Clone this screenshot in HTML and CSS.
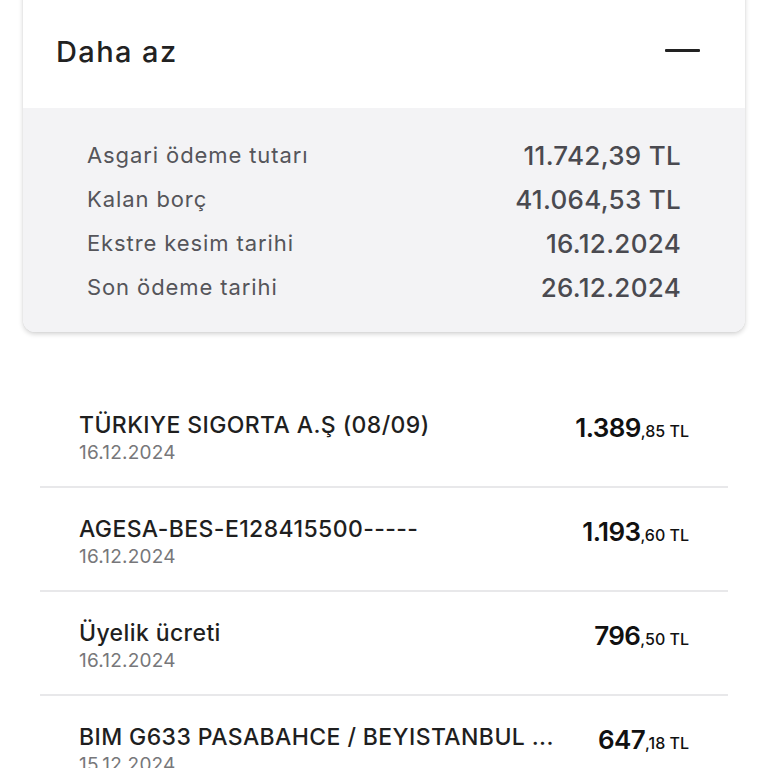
FILE: index.html
```html
<!DOCTYPE html>
<html lang="tr">
<head>
<meta charset="utf-8">
<link rel="stylesheet" href="styles.css">
</head>
<body>
<div class="page">
  <section class="card">
    <div class="card-head">
      <span class="card-title">Daha az</span>
      <span class="minus"></span>
    </div>
    <div class="card-body">
      <div class="info-row"><span class="info-label">Asgari ödeme tutarı</span><span class="info-value">11.742,39 TL</span></div>
      <div class="info-row"><span class="info-label">Kalan borç</span><span class="info-value">41.064,53 TL</span></div>
      <div class="info-row"><span class="info-label">Ekstre kesim tarihi</span><span class="info-value">16.12.2024</span></div>
      <div class="info-row"><span class="info-label">Son ödeme tarihi</span><span class="info-value">26.12.2024</span></div>
    </div>
  </section>

  <ul class="tx-list">
    <li class="tx">
      <div class="tx-main"><div class="tx-title">TÜRKIYE SIGORTA A.Ş (08/09)</div><div class="tx-date">16.12.2024</div></div>
      <div class="tx-amount"><span class="amt-int">1.389</span><span class="amt-dec">,85 TL</span></div>
    </li>
    <li class="tx">
      <div class="tx-main"><div class="tx-title">AGESA-BES-E128415500-----</div><div class="tx-date">16.12.2024</div></div>
      <div class="tx-amount"><span class="amt-int">1.193</span><span class="amt-dec">,60 TL</span></div>
    </li>
    <li class="tx">
      <div class="tx-main"><div class="tx-title">Üyelik ücreti</div><div class="tx-date">16.12.2024</div></div>
      <div class="tx-amount"><span class="amt-int">796</span><span class="amt-dec">,50 TL</span></div>
    </li>
    <li class="tx">
      <div class="tx-main"><div class="tx-title">BIM G633 PASABAHCE / BEYISTANBUL ...</div><div class="tx-date">15.12.2024</div></div>
      <div class="tx-amount"><span class="amt-int">647</span><span class="amt-dec">,18 TL</span></div>
    </li>
  </ul>
</div>
</body>
</html>
```

FILE: styles.css
```css
* { box-sizing: border-box; }
html, body { margin: 0; padding: 0; background: #ffffff; }
body {
  font-family: "Inter", "Noto Sans", sans-serif;
  width: 768px;
  height: 768px;
  overflow: hidden;
}
.page { display: flex; flex-direction: column; }

.card {
  margin: -20px 23px 0 23px;
  border-radius: 12px;
  background: #ffffff;
  box-shadow: 0 2px 5px rgba(0,0,0,0.18), 0 0 1px rgba(0,0,0,0.15);
  overflow: hidden;
}
.card-head {
  height: 128px;
  padding: 14px 45px 0 33px;
  display: flex;
  align-items: center;
  justify-content: space-between;
}
.card-title {
  font-size: 29px;
  font-weight: 500;
  color: #222222;
  letter-spacing: 1.4px;
}
.minus {
  width: 35px;
  height: 3px;
  background: #222222;
  border-radius: 1px;
  margin-top: -2px;
}
.card-body {
  background: #f3f3f5;
  padding: 25px 64px 23px 64px;
  display: flex;
  flex-direction: column;
}
.info-row {
  height: 44px;
  display: flex;
  align-items: center;
  justify-content: space-between;
}
.info-label {
  font-size: 22px;
  color: #55555a;
  letter-spacing: 0.9px;
}
.info-value {
  font-size: 26px;
  font-weight: 500;
  color: #4a4a50;
  letter-spacing: 0.3px;
}

.tx-list {
  list-style: none;
  margin: 52px 40px 0 40px;
  padding: 0;
}
.tx {
  height: 104px;
  padding: 26px 39px 0 39px;
  display: flex;
  justify-content: space-between;
  align-items: flex-start;
  border-bottom: 2px solid #e8e8ea;
}
.tx-main { display: flex; flex-direction: column; min-width: 0; }
.tx-title {
  font-size: 23px;
  line-height: 30px;
  color: #1f1f1f;
  font-weight: 500;
  letter-spacing: 0.4px;
  white-space: nowrap;
}
.tx-date {
  font-size: 19px;
  line-height: 26px;
  color: #77777a;
  letter-spacing: 0.2px;
}
.tx-amount {
  line-height: 32px;
  color: #111111;
  white-space: nowrap;
  padding-top: 2px;
}
.amt-int {
  font-size: 26px;
  font-weight: 600;
  letter-spacing: -0.6px;
}
.amt-dec {
  font-size: 16px;
  font-weight: 500;
}
```
